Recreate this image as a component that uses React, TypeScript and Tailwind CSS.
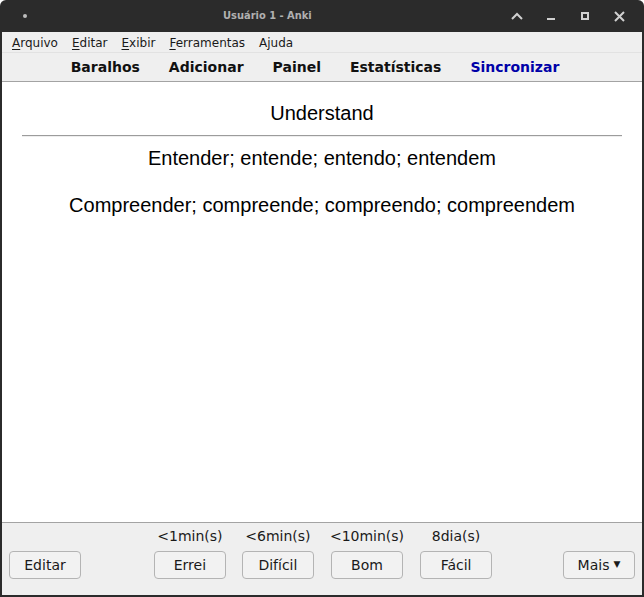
import React from "react";

const ui = { fontFamily: '"DejaVu Sans", "Noto Sans", sans-serif' };
const card = { fontFamily: '"Liberation Sans", Arial, sans-serif' };

const menus = [
  { key: "A", rest: "rquivo" },
  { key: "E", rest: "ditar" },
  { key: "E", rest: "xibir" },
  { key: "F", rest: "erramentas" },
  { key: "", rest: "Ajuda" },
];

const tools = ["Baralhos", "Adicionar", "Painel", "Estatísticas"];

const answers = [
  { time: "<1min(s)", label: "Errei" },
  { time: "<6min(s)", label: "Difícil" },
  { time: "<10min(s)", label: "Bom" },
  { time: "8dia(s)", label: "Fácil" },
];

function Btn({ children }: { children: React.ReactNode }) {
  return (
    <button className="w-[72px] h-[28px] rounded-[4px] border border-[#b4b4b4] bg-[#f2f2f2] text-[14px] text-[#1a1a1a] flex items-center justify-center">
      {children}
    </button>
  );
}

function TitleBar() {
  return (
    <div className="relative h-[32px] flex items-center text-[#d6d6d6]">
      <div className="absolute left-[23px] top-[14px] w-[4px] h-[4px] rounded-full bg-[#bdbdbd]" />
      <div
        className="absolute left-[223px] top-[8px] text-[11px] font-bold text-[#b0b0b0]"
        style={{ fontFamily: '"DejaVu Sans Condensed", "DejaVu Sans", sans-serif' }}
      >
        Usuário 1 - Anki
      </div>
      <div className="ml-auto flex items-center mr-[8px]">
        <div className="w-[34px] h-[32px] flex items-center justify-center">
          <svg width="12" height="8" viewBox="0 0 12 8">
            <path d="M1 7 L6 2 L11 7" stroke="#d0d0d0" strokeWidth="2" fill="none" />
          </svg>
        </div>
        <div className="w-[34px] h-[32px] flex items-center justify-center">
          <div className="w-[8px] h-[2px] bg-[#d0d0d0] mt-[5px]" />
        </div>
        <div className="w-[34px] h-[32px] flex items-center justify-center">
          <div className="w-[8px] h-[8px] border-2 border-[#d0d0d0]" />
        </div>
        <div className="w-[34px] h-[32px] flex items-center justify-center">
          <svg width="11" height="11" viewBox="0 0 11 11">
            <path d="M1 1 L10 10 M10 1 L1 10" stroke="#d0d0d0" strokeWidth="2" />
          </svg>
        </div>
      </div>
    </div>
  );
}

export default function App() {
  return (
    <div className="w-[644px] h-[597px] bg-white" style={ui}>
      <div className="w-full h-full bg-[#2b2b2b] rounded-t-[6px] flex flex-col">
        <TitleBar />
        <div className="flex-1 flex flex-col px-[2px] pb-[2px]">
          {/* menu */}
          <div className="h-[20px] bg-[#efefef] flex items-center pl-[3px] pt-[1px] text-[12px] text-[#1a1a1a]">
            {menus.map((m) => (
              <span key={m.rest} className="px-[7px]">
                {m.key && <span className="underline underline-offset-2">{m.key}</span>}
                {m.rest}
              </span>
            ))}
          </div>
          {/* toolbar */}
          <div className="h-[30px] bg-[#efefef] border-t border-[#e2e2e2] border-b border-b-[#a3a3a3] flex items-center justify-center gap-[29px] pr-[14px] text-[14px] font-bold text-[#111]">
            {tools.map((t) => (
              <span key={t}>{t}</span>
            ))}
            <span className="text-[#0000a8]">Sincronizar</span>
          </div>
          {/* card */}
          <div className="flex-1 bg-white px-[20px] pt-[20px] text-center text-[20px] leading-[23px] text-black" style={card}>
            <div>Understand</div>
            <div className="my-[10px] h-[2px] border-t border-[#9c9c9c] border-b border-b-[#eeeeee]" />
            <div>Entender; entende; entendo; entendem</div>
            <div className="h-[24px]" />
            <div>Compreender; compreende; compreendo; compreendem</div>
          </div>
          {/* bottom bar */}
          <div className="h-[73px] bg-[#efefef] border-t border-[#a3a3a3] flex items-end px-[7px] pb-[16px] text-[#1a1a1a]">
            <Btn>Editar</Btn>
            <div className="flex-1 flex justify-center gap-[16px] pl-[2px]">
              {answers.map((a) => (
                <div key={a.label} className="flex flex-col items-center">
                  <div className="text-[14px] leading-[17px] mb-[6px]">{a.time}</div>
                  <Btn>{a.label}</Btn>
                </div>
              ))}
            </div>
            <Btn>
              Mais <span className="ml-[4px] text-[9px]">▼</span>
            </Btn>
          </div>
        </div>
      </div>
    </div>
  );
}
